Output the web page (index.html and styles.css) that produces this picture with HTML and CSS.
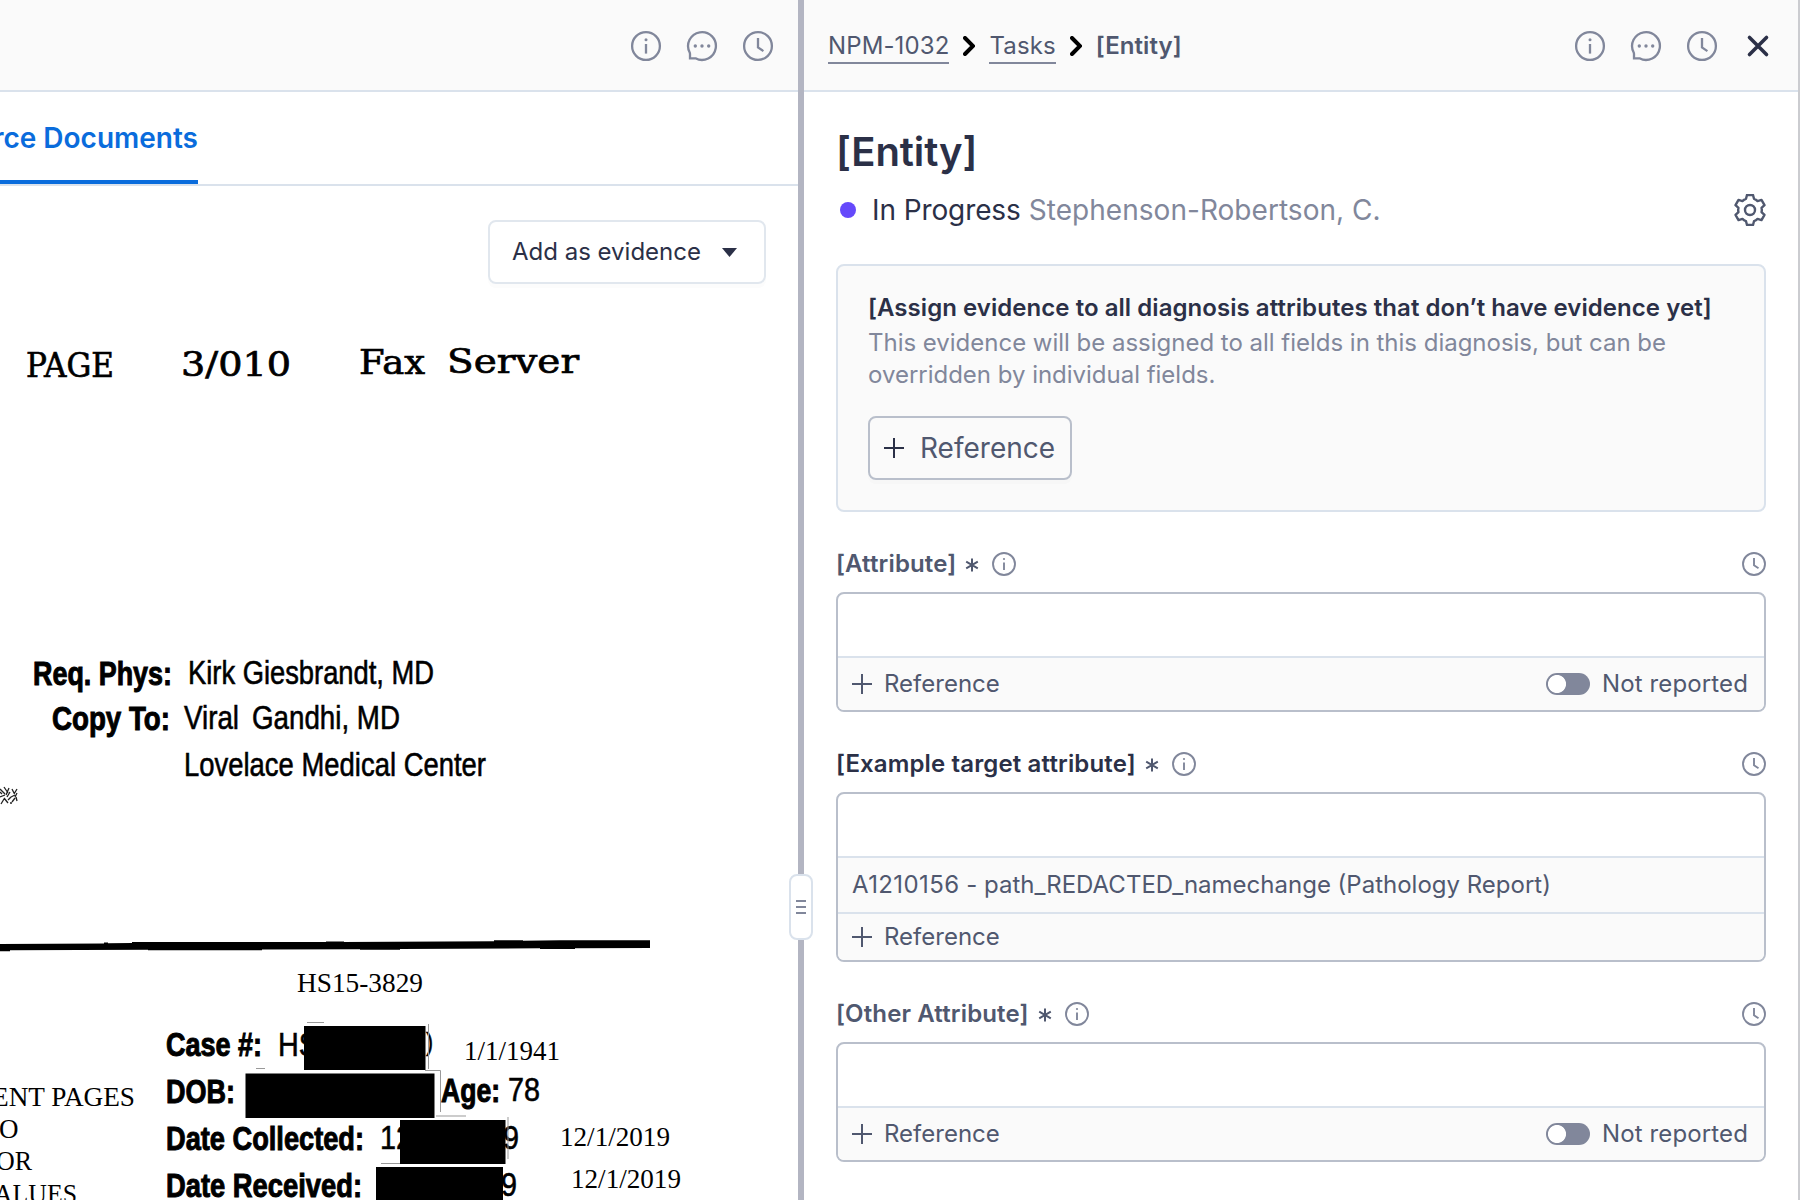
FILE: index.html
```html
<!DOCTYPE html>
<html lang="en">
<head>
<meta charset="utf-8">
<title>NPM-1032 – Tasks – [Entity]</title>
<link rel="stylesheet" href="styles.css">
</head>
<body>
<svg class="sprite" aria-hidden="true">
  <symbol id="info" viewBox="0 0 32 32"><circle cx="16" cy="16" r="13.900"/><path d="M16 14v9.600"/><circle class="dot" cx="16" cy="9.800" r="1.500"/></symbol>
  <symbol id="chat" viewBox="0 0 32 32"><path d="M3.700 22.500A13.900 13.900 0 1 1 9.500 28.300H4V24Q4 23.200 3.700 22.500Z"/><circle class="dot" cx="9.300" cy="16" r="1.700"/><circle class="dot" cx="16" cy="16" r="1.700"/><circle class="dot" cx="22.700" cy="16" r="1.700"/></symbol>
  <symbol id="clock" viewBox="0 0 32 32"><circle cx="16" cy="16" r="13.900"/><path d="M16 8v9.500l5.400 3.600"/></symbol>
  <symbol id="info-sm" viewBox="0 0 24 24"><circle cx="12" cy="12" r="11"/><path d="M12 10.500v7.500"/><circle class="dot" cx="12" cy="7" r="1.100"/></symbol>
  <symbol id="clock-sm" viewBox="0 0 24 24"><circle cx="12" cy="12" r="11"/><path d="M12 6v7.300l4.500 2.900"/></symbol>
  <symbol id="plus" viewBox="0 0 20 20"><path d="M10 0v20M0 10h20"/></symbol>
  <symbol id="chevron" viewBox="0 0 12 20"><path d="M2 2l8 8-8 8"/></symbol>
</svg>
<div class="app">
  <section class="source">
    <header class="bar bar-source">
      <svg class="icon"><use href="#info"/></svg>
      <svg class="icon"><use href="#chat"/></svg>
      <svg class="icon"><use href="#clock"/></svg>
    </header>
    <nav class="tabs"><a class="tab">Source Documents</a></nav>
    <div class="tools">
      <button class="btn evidence"><span>Add as evidence</span><svg class="caret" viewBox="0 0 15 9"><path d="M0 0h15L7.500 9z"/></svg></button>
    </div>
    <svg class="scan" viewBox="0 300 798 900">
      <g class="fax">
        <text x="26" y="376.500" textLength="88">PAGE</text>
        <text x="181" y="375.500" textLength="110">3/010</text>
        <text x="359" y="374" textLength="66">Fax</text>
        <text x="447" y="372.500" textLength="132">Server</text>
      </g>
      <g class="bold">
        <text x="33" y="685" textLength="139">Req. Phys:</text>
        <text x="52" y="729.500" textLength="118">Copy To:</text>
        <text x="166" y="1056" textLength="96">Case #:</text>
        <text x="166" y="1102.500" textLength="69">DOB:</text>
        <text x="441" y="1102" textLength="59">Age:</text>
        <text x="166" y="1149.500" textLength="198">Date Collected:</text>
        <text x="166" y="1197" textLength="196">Date Received:</text>
      </g>
      <g class="regular">
        <text x="188" y="684" textLength="246">Kirk Giesbrandt, MD</text>
        <text x="184" y="729" textLength="55">Viral</text>
        <text x="252" y="729" textLength="148">Gandhi, MD</text>
        <text x="184" y="775.500" textLength="302">Lovelace Medical Center</text>
        <text x="278" y="1056" textLength="40">HS</text>
        <text class="sliver" x="426" y="1051" textLength="7">)</text>
        <text x="508" y="1101" textLength="32">78</text>
        <text x="380" y="1149" textLength="32">12</text>
        <text x="503" y="1149" textLength="16">9</text>
        <text x="501" y="1196" textLength="16">9</text>
      </g>
      <path class="speck" d="M0 789l5 5M4 787l4 6M9 788l-3 7M12 789l2 4M0 797l5-2M7 797l3-5M11 797l4-2M17 789l-3 5M17 793l-2 4M1 804l3-5M4 798l4 5M8 800l3-3M12 802l3-4M16 797l1 4M0 792l2 2M10 803l2 0"/>
      <path d="M0 944L104 943.500V942.500H108V943.300L132 943V942H160L326 942V941.500H344V942L494 941.300V940.300H523V940.800L560 940.300H650V948L575 948.300V949H540V948.300L400 949V949.800H360V949.200L262 949.500V950.300H148V949.700L10 950.300V951.300H0Z"/>
      <path d="M304 1026h121.500v44H304zM245.500 1073.500H434.500V1118H245.500zM400 1120H505.500V1164H400zM376 1167H503V1200H376z"/>
      <path class="hair" d="M307 1022.500h17M428.500 1024v45M425 1070.500h15.500V1112M436 1116h30M508 1117v42M381 1163.500h19M256 1068.500h9"/>
      <g class="stamp">
        <text x="297" y="992" textLength="126">HS15-3829</text>
        <text x="464" y="1060" textLength="96">1/1/1941</text>
        <text x="560" y="1145.500" textLength="110">12/1/2019</text>
        <text x="571" y="1188" textLength="110">12/1/2019</text>
        <text x="-8" y="1106" textLength="143">ENT PAGES</text>
        <text x="-1" y="1138">O</text>
        <text x="-4" y="1170" textLength="36">OR</text>
        <text x="-6" y="1203" textLength="83">ALUES</text>
      </g>
    </svg>
  </section>
  <div class="splitter"><div class="grip"><i></i><i></i><i></i></div></div>
  <section class="entity">
    <header class="bar">
      <nav class="crumbs">
        <a class="link">NPM-1032</a><svg class="chev"><use href="#chevron"/></svg>
        <a class="link">Tasks</a><svg class="chev"><use href="#chevron"/></svg>
        <b class="here">[Entity]</b>
      </nav>
      <svg class="icon"><use href="#info"/></svg>
      <svg class="icon"><use href="#chat"/></svg>
      <svg class="icon"><use href="#clock"/></svg>
      <svg class="close" viewBox="0 0 32 32"><path d="M7.500 7.500l17 17M24.500 7.500l-17 17"/></svg>
    </header>
    <main class="content">
      <h1 class="title">[Entity]</h1>
      <div class="status">
        <i class="bullet"></i><span class="state">In Progress</span><span class="owner">Stephenson-Robertson, C.</span>
        <svg class="gear" viewBox="-16 -16 32 32"><path d="M-3-15H3L4-11.200Q6-10.500 7.530-8.960L11.490-10.100 14.490-4.900 11.530-2.040Q12.100 0 11.530 2.040L14.490 4.900 11.490 10.100 7.530 8.960Q6 10.500 4 11.200L3 15H-3L-4 11.200Q-6 10.500-7.530 8.960L-11.490 10.100-14.490 4.900-11.530 2.040Q-12.100 0-11.530-2.040L-14.490-4.900-11.490-10.100-7.530-8.960Q-6-10.500-4-11.200Z"/><circle r="5"/></svg>
      </div>
      <section class="assign">
        <h2 class="assign-title">[Assign evidence to all diagnosis attributes that don’t have evidence yet]</h2>
        <p class="assign-text">This evidence will be assigned to all fields in this diagnosis, but can be<br>overridden by individual fields.</p>
        <button class="btn add"><svg class="plus"><use href="#plus"/></svg><span>Reference</span></button>
      </section>
      <section class="field">
        <div class="label"><b>[Attribute]</b><svg class="star" viewBox="-8 -8 16 16"><path d="M0-6.500V6.500M-5.800-3.300L5.800 3.300M5.800-3.300L-5.800 3.300"/></svg><svg class="icon small"><use href="#info-sm"/></svg><svg class="icon small end"><use href="#clock-sm"/></svg></div>
        <div class="box">
          <div class="input"></div>
          <div class="row foot"><svg class="plus"><use href="#plus"/></svg><span class="ref">Reference</span><i class="toggle"></i><span class="nr">Not reported</span></div>
        </div>
      </section>
      <section class="field">
        <div class="label target"><b>[Example target attribute]</b><svg class="star" viewBox="-8 -8 16 16"><path d="M0-6.500V6.500M-5.800-3.300L5.800 3.300M5.800-3.300L-5.800 3.300"/></svg><svg class="icon small"><use href="#info-sm"/></svg><svg class="icon small end"><use href="#clock-sm"/></svg></div>
        <div class="box">
          <div class="input"></div>
          <div class="row doc"><span class="file"><span class="num">A1210156</span> - path_REDACTED_namechange (Pathology Report)</span></div>
          <div class="row foot short"><svg class="plus"><use href="#plus"/></svg><span class="ref">Reference</span></div>
        </div>
      </section>
      <section class="field">
        <div class="label"><b>[Other Attribute]</b><svg class="star" viewBox="-8 -8 16 16"><path d="M0-6.500V6.500M-5.800-3.300L5.800 3.300M5.800-3.300L-5.800 3.300"/></svg><svg class="icon small"><use href="#info-sm"/></svg><svg class="icon small end"><use href="#clock-sm"/></svg></div>
        <div class="box">
          <div class="input"></div>
          <div class="row foot"><svg class="plus"><use href="#plus"/></svg><span class="ref">Reference</span><i class="toggle"></i><span class="nr">Not reported</span></div>
        </div>
      </section>
    </main>
  </section>
</div>
<script src="fit.js"></script>
</body>
</html>
```
FILE: fit.js
```js
// Scanned lines are condensed to their box, glyphs included.
document.querySelectorAll('.scan text[textLength]').forEach(function (t) {
  t.setAttribute('lengthAdjust', 'spacingAndGlyphs');
});
```
FILE: styles.css
```css
* { box-sizing: border-box; }
body { margin: 0; background: #fff; font-family: Inter, "Liberation Sans", sans-serif; font-size: 24px; line-height: 32px; color: #50586f; }
svg { display: block; flex: none; fill: none; stroke: currentColor; stroke-width: 2; }
h1, h2, p { margin: 0; }
.sprite { position: absolute; width: 0; height: 0; }
.app { display: flex; width: 1800px; height: 1200px; overflow: hidden; }

.source { width: 798px; display: flex; flex-direction: column; overflow: hidden; }
.bar { display: flex; align-items: center; gap: 24px; height: 92px; padding: 2px 24px 0; background: #fafafa; border-bottom: 2px solid #dae2ec; flex: none; }
.bar-source { justify-content: flex-end; }
.icon { width: 32px; height: 32px; color: #81879b; stroke-width: 2.300; }
.dot { fill: #81879b; stroke: none; }
.tabs { height: 94px; flex: none; display: flex; border-bottom: 2px solid #dae2ec; }
.tab { width: 198px; height: 92px; padding-top: 30px; display: flex; justify-content: flex-end; white-space: nowrap; font-size: 28px; font-weight: 600; color: #0a6cdc; border-bottom: 4px solid #0a6cdc; }
.tools { height: 114px; flex: none; padding: 34px 32px 0 0; display: flex; justify-content: flex-end; }
.btn { display: flex; align-items: center; height: 64px; font: inherit; background: none; border-radius: 8px; box-shadow: 0 4px 0 rgba(40, 46, 70, .015); }
.evidence { width: 278px; padding: 0 27px 0 22px; justify-content: space-between; border: 2px solid #e1e7ee; color: #2b3047; white-space: nowrap; }
.caret { width: 15px; height: 9px; fill: #2b3047; stroke: none; }

.scan { width: 798px; height: 900px; fill: #000; stroke: none; }
.fax { font: 34px "DejaVu Serif", serif; stroke: #000; stroke-width: .7; }
.bold { font: bold 34px "Liberation Sans", sans-serif; stroke: #000; stroke-width: 1; }
.regular { font: 34px "Liberation Sans", sans-serif; stroke: #000; stroke-width: .6; }
.sliver { font-size: 26px; }
.stamp { font: 27px "Liberation Serif", serif; }
.speck { stroke: #222; stroke-width: 1.3; }
.hair { fill: none; stroke: #999; stroke-width: 1; }

.splitter { width: 6px; background: #b3b5c2; display: flex; justify-content: center; padding-top: 874px; z-index: 1; }
.grip { flex: none; width: 24px; height: 66px; background: #fff; border: 2px solid #dae2ec; border-radius: 8px; display: flex; flex-direction: column; align-items: center; justify-content: center; gap: 4px; }
.grip i { width: 10px; height: 2px; background: #81879b; }

.entity { width: 996px; border-right: 2px solid #cbccd0; }
.crumbs { display: flex; align-items: center; flex: 1; }
.link { border-bottom: 2px solid #81879b; height: 34px; line-height: 32px; margin-top: 2px; letter-spacing: .12px; }
.chev { width: 12px; height: 20px; margin: 0 14px; stroke: #000; stroke-width: 4; stroke-linecap: round; }
.here { font-weight: 600; letter-spacing: .1px; }
.close { width: 32px; height: 32px; color: #2b3047; stroke-width: 3.600; stroke-linecap: round; }

.content { padding: 32px 32px 0; }
.title { font-size: 40px; line-height: 56px; font-weight: 600; color: #2b3047; letter-spacing: -.1px; }
.status { display: flex; align-items: center; height: 60px; font-size: 28px; }
.bullet { width: 16px; height: 16px; border-radius: 50%; background: #6549fb; margin: 0 16px 0 4px; }
.state { color: #2b3047; letter-spacing: -.1px; }
.owner { color: #81879b; margin-left: 8px; letter-spacing: .04px; }
.gear { width: 32px; height: 32px; margin-left: auto; stroke-width: 2.400; stroke-linejoin: round; }
.assign { height: 248px; margin-top: 24px; padding: 24px 30px; background: #fafafa; border: 2px solid #dae2ec; border-radius: 8px; }
.assign-title { font-size: 24px; line-height: 36px; margin-bottom: 1px; font-weight: 600; letter-spacing: .05px; color: #2b3047; white-space: nowrap; }
.assign-text { color: #81879b; white-space: nowrap; letter-spacing: -.015px; }
.add { width: 204px; margin-top: 25px; padding: 0 14px; gap: 16px; border: 2px solid #b9bfcb; font-size: 28px; color: #50586f; }
.plus { width: 20px; height: 20px; }
.add .plus { color: #2b3047; }
.field { padding-top: 36px; }
.label { display: flex; align-items: center; height: 32px; margin-bottom: 12px; }
.label b { font-weight: 600; letter-spacing: .14px; }
.target b { color: #2b3047; }
.star { width: 16px; height: 16px; margin: 2px 12px 0 8px; }
.small { width: 24px; height: 24px; stroke-width: 1.900; }
.end { margin-left: auto; }
.box { border: 2px solid #b9bfcb; border-radius: 8px; overflow: hidden; background: #fff; }
.input { height: 62px; }
.row { display: flex; align-items: center; background: #fafafa; border-top: 2px solid #dae2ec; }
.foot { height: 54px; padding: 0 16px 0 14px; }
.doc { height: 56px; padding: 0 14px; }
.num { letter-spacing: .4px; }
.short { height: 48px; }
.ref { margin-left: 12px; }
.toggle { width: 44px; height: 22px; border-radius: 11px; background: radial-gradient(circle at 11px 11px, #fff 8.600px, #81879b 9.400px); margin-left: auto; }
.nr { margin-left: 12px; letter-spacing: .12px; }
```
